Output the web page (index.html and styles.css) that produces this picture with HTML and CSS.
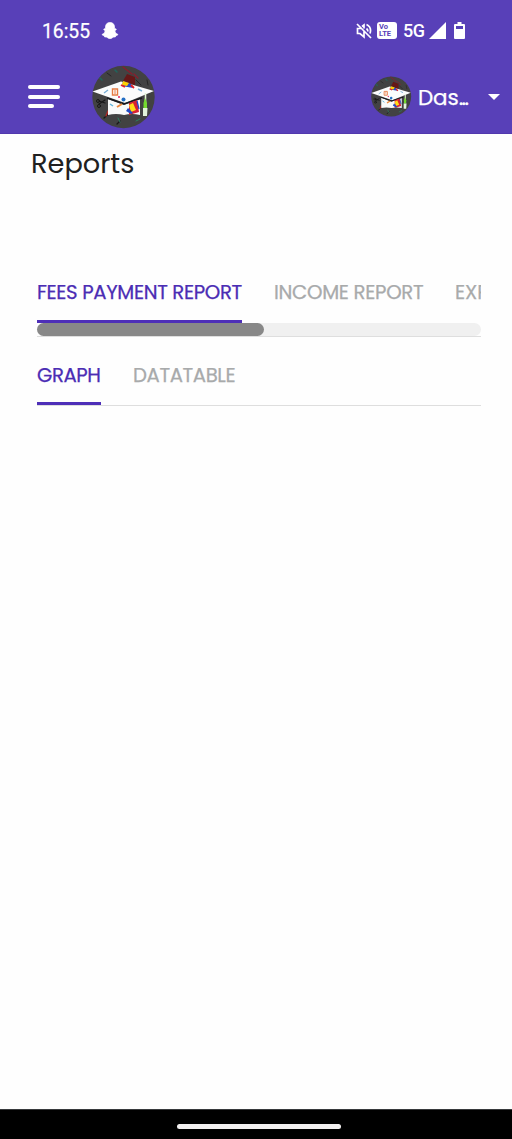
FILE: index.html
```html
<!DOCTYPE html>
<html lang="en">
<head>
<meta charset="utf-8">
<meta name="viewport" content="width=device-width, initial-scale=1">
<title>Reports</title>
<link rel="stylesheet" href="styles.css">
</head>
<body>
<svg class="defs" aria-hidden="true">
  <symbol id="logo" viewBox="12 9 64 64">
    <circle cx="43.5" cy="41" r="31.2" fill="#424242"/>
    <g fill="none" stroke-linecap="round">
      <path d="M43 11l9 7M54 18l4 4" stroke="#8b1c2c" stroke-width="1.3"/>
      <path d="M20 22l2 2M35 14l2 2" stroke="#20655c" stroke-width="1.6"/>
      <path d="M56 24l5 5M67 24l1 5M27 17l4 3" stroke="#252525" stroke-width="1"/>
      <path d="M19 48l6-4M19 45l6 2M32 55l-8 7M40 65l-3 3" stroke="#171717" stroke-width="1.2"/>
      <circle cx="18" cy="45" r="1.500" stroke="#171717"/>
      <circle cx="19" cy="50" r="1.500" stroke="#171717"/>
      <path d="M28 55l-2 5" stroke="#b72a24" stroke-width="1.3"/>
      <path d="M38 62l2 4M56 65l4-2" stroke="#2c8060" stroke-width="1"/>
    </g>
    <path d="M47 18l8 3v8l-12-4z" fill="#651717"/>
    <path d="M28 43l16 6 16-6v16q-8-2-16 0-8-2-16 0z" fill="#f9faf9"/>
    <path d="M12.500 35.500L41 25.500 74 35 45 47z" fill="#fbfcfc"/>
    <path d="M27 42l17 6 18-6" fill="none" stroke="#17191d" stroke-width="1.600"/>
    <path d="M32.500 33h5v6h-5z" fill="#fff" stroke="#e57b43" stroke-width="1.400"/>
    <path d="M34 35h2M34 37h2" stroke="#e57b43"/>
    <path d="M43 25l8 3 2 4-11-2z" fill="#254bc4"/>
    <path d="M43 25l6 2-2 3-5-1z" fill="#ffd000"/>
    <path d="M41 29l4 2M51 29l3 3" stroke="#e51f24" stroke-width="1.800"/>
    <path d="M24 37l4-3M58 33l4 2" stroke="#78aed4" stroke-width="1.400"/>
    <circle cx="39" cy="41" r="1" fill="#e21c58"/>
    <circle cx="43.500" cy="43.500" r="2" fill="#236fc5"/>
    <path d="M30 48l3 2" stroke="#65b7db" stroke-width="1.500"/>
    <path d="M37 51l5-3" stroke="#ed873b" stroke-width="2"/>
    <path d="M49 47l8-3 2 12-10 3z" fill="#d92232"/>
    <path d="M49 49l4-2 3 7-5 2z" fill="#ffdc18"/>
    <path d="M46 55l5 3 2-1-5-5z" fill="#214bc4"/>
    <path d="M57 45l2 8" stroke="#214bc4" stroke-width="1.300"/>
    <path d="M65.500 37v11" stroke="#e5f6d9" stroke-width="1.600"/>
    <path d="M63.500 47l1.500-5 2 5v5h-3.500z" fill="#74d92f"/>
    <path d="M63 52h4.500l-.5 8h-4z" fill="#e3f3dc"/>
  </symbol>
</svg>
<header class="header">
  <div class="status">
    <span class="time">16:55</span>
    <svg class="ghost" viewBox="0 0 18 18"><path d="M9 .5c3 0 4.500 2 4.500 4.500v2l1.300-.3.500 1-1.500 1c.5 2.200 1.500 3 3 3.600.2 1-1 1.200-2 1.400l-.5 1.300c-2-.2-2.500.4-3.300 1-1.200.8-2.800.8-4 0-.8-.6-1.300-1.200-3.300-1l-.5-1.300c-1-.2-2.200-.4-2-1.400 1.500-.6 2.500-1.400 3-3.600l-1.500-1 .5-1 1.300.3V5C4.500 2.500 6 .5 9 .5z" fill="#fff" stroke="#fff" stroke-width=".7"/></svg>
    <div class="indicators">
      <svg class="mute" viewBox="0 0 16 16" fill="none" stroke="#fff" stroke-width="1.700"><path d="M1 1l14 14M5 5.500H1.500v5H4l4 3.500V8.500M6 3.500L8 2v3.500M10.500 5.500q1.500 1.200 1.300 3M10.500 1.500q5.500 2.500 3.500 9"/></svg>
      <span class="volte"><span>Vo</span><span>LTE</span></span>
      <span class="network">5G</span>
      <svg class="signal" viewBox="0 0 16 16"><path d="M0 16L16 0v16z" fill="#fff"/></svg>
      <svg class="battery" viewBox="0 0 11 17"><path d="M3.500 0h4v2H10a1 1 0 0 1 1 1v13a1 1 0 0 1-1 1H1a1 1 0 0 1-1-1V3a1 1 0 0 1 1-1h2.500z" fill="#fff"/><path d="M2 4h7v3H2z" fill="#5540b8"/></svg>
    </div>
  </div>
  <nav class="navbar">
    <button class="menu" aria-label="Menu"><i></i><i></i><i></i></button>
    <svg class="brand"><use href="#logo"/></svg>
    <button class="profile"><svg class="avatar"><use href="#logo"/></svg><span class="name">Das<span class="dots">...</span></span><i class="caret"></i></button>
  </nav>
</header>
<main class="main">
  <h1 class="title">Reports</h1>
  <div class="tabs report-tabs">
    <div class="tab-row">
      <span class="tab active fees">FEES PAYMENT REPORT</span>
      <span class="tab income">INCOME REPORT</span>
      <span class="tab expense">EXPENSE REPORT</span>
    </div>
    <div class="track"><div class="thumb"></div></div>
  </div>
  <div class="tabs view-tabs">
    <div class="tab-row">
      <span class="tab active graph">GRAPH</span>
      <span class="tab datatable">DATATABLE</span>
    </div>
  </div>
</main>
<footer class="system-nav"><div class="handle"></div></footer>
</body>
</html>
```
FILE: styles.css
```css
* { box-sizing: border-box; }
body { margin: 0; height: 1139px; display: flex; flex-direction: column; background: #fefefe; font-family: Poppins, Inter, sans-serif; overflow: hidden; }
.defs { display: none; }
svg { display: block; flex: none; }
button { border: 0; padding: 0; background: none; font: inherit; color: inherit; }
.header { height: 134px; flex: none; background: #5840b8; color: #fff; border-bottom: 1px solid #5138ad; }
.status { height: 60px; padding: 1px 47px 0 42px; display: flex; align-items: center; font-family: Roboto, sans-serif; }
.time { width: 50px; padding-top: 1px; font-size: 19.3px; -webkit-text-stroke: .25px currentColor; }
.ghost { width: 18px; height: 18px; margin-left: 9px; }
.indicators { margin-left: auto; display: flex; align-items: center; }
.mute { width: 16px; height: 16px; }
.volte { width: 20px; height: 17px; margin: -1px 0 0 5px; padding: 1px 2px; border-radius: 3px; background: #fff; color: #5840b8; font-size: 7.5px; font-weight: 700; line-height: 7.5px; display: flex; flex-direction: column; }
.network { width: 21px; margin-left: 6px; font-size: 18px; font-weight: 500; letter-spacing: -.6px; }
.signal { width: 17px; height: 17px; margin-left: 5px; }
.battery { width: 11px; height: 17px; margin-left: 8px; }
.navbar { height: 73px; padding: 0 12px 0 28px; display: flex; align-items: center; }
.menu { width: 32px; height: 23px; display: flex; flex-direction: column; justify-content: space-between; }
.menu i { width: 32px; height: 4px; border-radius: 2px; background: #fff; }
.menu i:last-child { width: 26px; }
.brand { width: 64px; height: 64px; margin-left: 32px; }
.profile { margin-left: auto; display: flex; align-items: center; }
.avatar { width: 41px; height: 41px; }
.name { width: 54px; margin-left: 6px; padding-top: 2px; font-size: 21.5px; letter-spacing: -.1px; -webkit-text-stroke: .25px currentColor; line-height: 28px; white-space: nowrap; text-align: left; }
.dots { letter-spacing: -1.6px; }
.caret { margin-left: 16px; border: 6px solid transparent; border-top-color: #fff; border-bottom: 0; }
.main { flex: 1; padding: 10px 31px 0 37px; }
.title { margin: 0 0 0 -6px; height: 40px; font-size: 27.2px; line-height: 40px; font-weight: 400; color: #202020; }
.tabs { border-bottom: 1px solid #dedede; }
.report-tabs { height: 69px; margin-top: 84px; }
.tab-row { display: flex; gap: 32px; overflow: hidden; }
.tab { height: 55px; flex: none; padding-top: 8px; border-bottom: 3px solid transparent; color: #a8aaab; font-size: 19.7px; line-height: 32px; font-weight: 400; -webkit-text-stroke: .25px currentColor; white-space: nowrap; }
.active { color: #4b2db4; border-color: #4e2fb8; }
.fees { width: 205px; letter-spacing: -.35px; }
.income { width: 149px; letter-spacing: -.3px; }
.expense { letter-spacing: 0; }
.track { height: 13px; border-radius: 7px; background: #f0f0f0; }
.thumb { width: 227px; height: 13px; border-radius: 7px; background: #888; }
.view-tabs { height: 69px; }
.view-tabs .tab { height: 68px; padding-top: 22px; }
.graph { width: 64px; letter-spacing: -.4px; }
.datatable { width: 103px; letter-spacing: -.4px; }
.system-nav { height: 30px; flex: none; background: #000; border-top: 1px solid #37393c; padding: 14px 0 0 177px; }
.handle { width: 164px; height: 5px; border-radius: 3px; background: #f2f0f0; }
```
